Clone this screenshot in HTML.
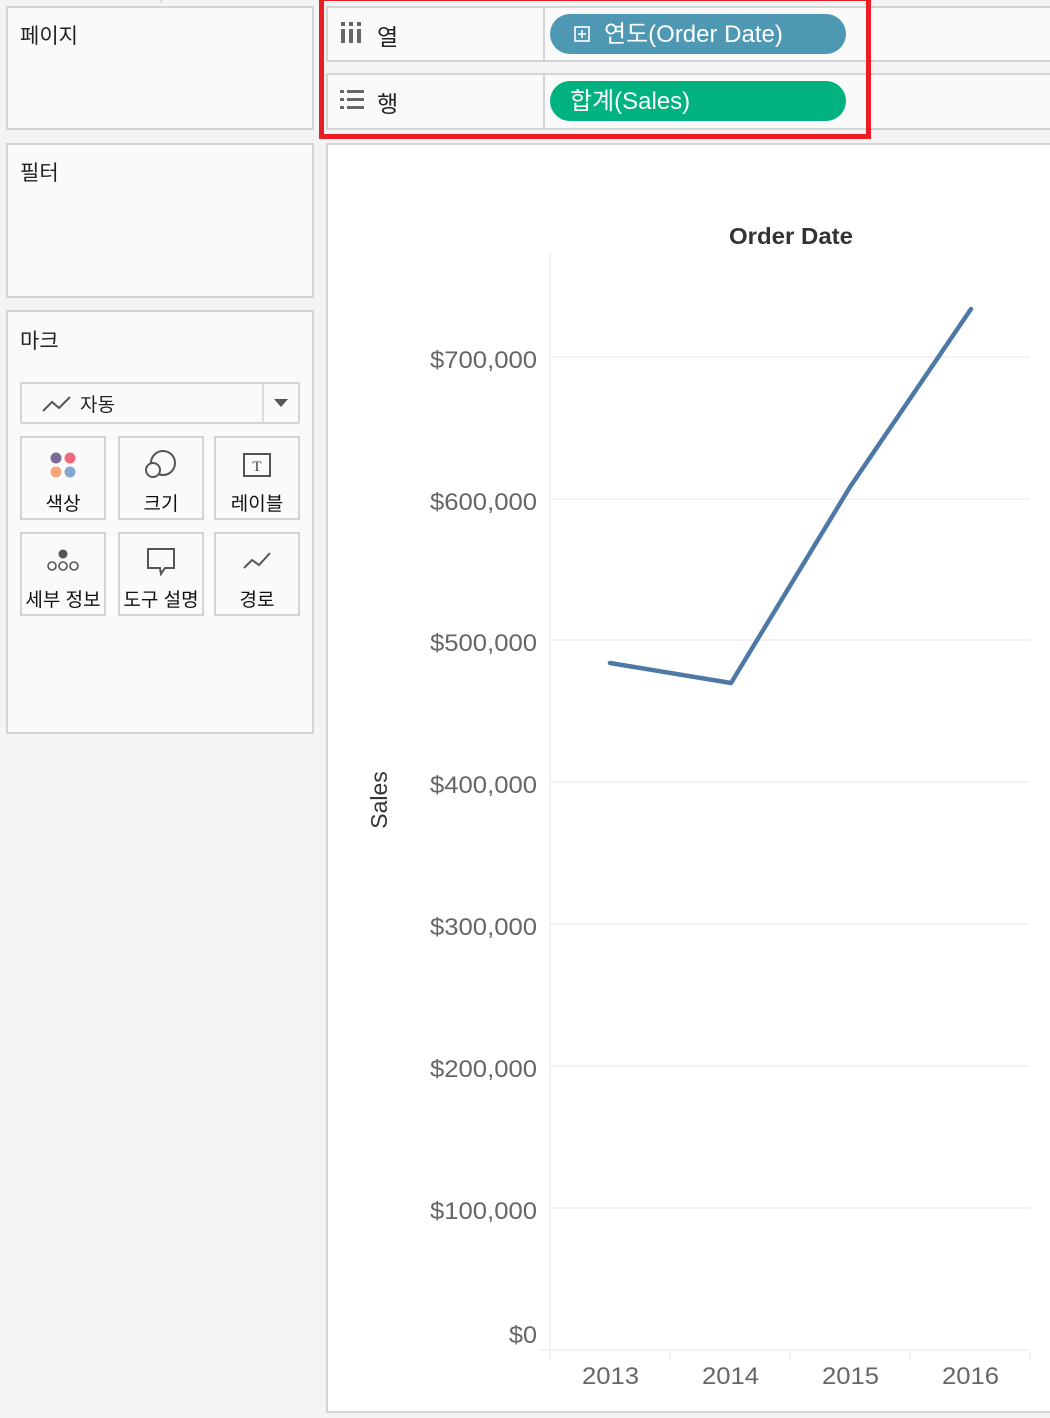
<!DOCTYPE html>
<html><head><meta charset="utf-8"><style>
*{margin:0;padding:0;box-sizing:border-box}
body{width:1050px;height:1418px;background:#f4f4f4;position:relative;overflow:hidden;font-family:"Liberation Sans","Noto Sans CJK KR",sans-serif;color:#333}
.p{position:absolute;background:#fafafa;border:2px solid #d4d4d4}
.t{position:absolute;font-size:21px;color:#222}
.card{position:absolute;width:86px;height:84px;border:2px solid #d4d4d4;background:#fafafa;text-align:center}
.card span{position:absolute;left:0;right:0;top:51px;font-size:19px;color:#111;white-space:nowrap}
.card svg{position:absolute;left:50%;top:12px;transform:translateX(-50%)}
.pill{position:absolute;left:550px;width:296px;height:40px;border-radius:20px;color:#fff;font-size:24px;line-height:41px}
</style></head><body>
<div style="position:absolute;left:160px;top:0;width:2px;height:3px;background:#ddd"></div>
<div class="p" style="left:6px;top:6px;width:308px;height:124px"></div>
<div class="t" style="left:20px;top:20px">페이지</div>
<div class="p" style="left:6px;top:143px;width:308px;height:155px"></div>
<div class="t" style="left:20px;top:157px">필터</div>
<div class="p" style="left:6px;top:310px;width:308px;height:424px"></div>
<div class="t" style="left:20px;top:325px">마크</div>
<div style="position:absolute;left:20px;top:382px;width:280px;height:42px;border:2px solid #d4d4d4;background:#fafafa;border-radius:2px">
<div style="position:absolute;left:240px;top:0;width:2px;height:38px;background:#ddd"></div>
<svg style="position:absolute;left:20px;top:10px" width="30" height="20"><polyline points="1,17 10,8 17,14 28,3" fill="none" stroke="#555" stroke-width="2"/></svg>
<span style="position:absolute;left:58px;top:6px;font-size:19px;color:#222">자동</span>
<svg style="position:absolute;left:252px;top:15px" width="14" height="9"><polygon points="0,0 14,0 7,8" fill="#555"/></svg>
</div>
<div class="card" style="left:20px;top:436px"><svg width="30" height="30"><circle cx="8" cy="8" r="5.5" fill="#7b6a9a"/><circle cx="22" cy="8" r="5.5" fill="#f0687a"/><circle cx="8" cy="22" r="5.5" fill="#f3a47a"/><circle cx="22" cy="22" r="5.5" fill="#82a8d1"/></svg><span>색상</span></div>
<div class="card" style="left:118px;top:436px"><svg width="34" height="30"><circle cx="19" cy="13" r="12" fill="none" stroke="#555" stroke-width="2"/><circle cx="9" cy="20" r="7" fill="#fafafa" stroke="#555" stroke-width="2"/></svg><span>크기</span></div>
<div class="card" style="left:214px;top:436px"><svg width="30" height="30"><rect x="2" y="4" width="26" height="22" fill="none" stroke="#555" stroke-width="2"/><text x="15" y="21" font-size="15" text-anchor="middle" fill="#444" font-family="Liberation Serif">T</text></svg><span>레이블</span></div>
<div class="card" style="left:20px;top:532px"><svg width="34" height="30"><circle cx="17" cy="8" r="4.5" fill="#555"/><circle cx="6" cy="20" r="4" fill="none" stroke="#555" stroke-width="1.6"/><circle cx="17" cy="20" r="4" fill="none" stroke="#555" stroke-width="1.6"/><circle cx="28" cy="20" r="4" fill="none" stroke="#555" stroke-width="1.6"/></svg><span>세부 정보</span></div>
<div class="card" style="left:118px;top:532px"><svg width="32" height="32"><path d="M3,3 H29 V22 H20 L16,28 L15,22 H3 Z" fill="none" stroke="#555" stroke-width="2"/></svg><span>도구 설명</span></div>
<div class="card" style="left:214px;top:532px"><svg width="32" height="30"><polyline points="3,22 11,14 18,19 29,7" fill="none" stroke="#555" stroke-width="2"/></svg><span>경로</span></div>

<div class="p" style="left:326px;top:6px;width:740px;height:56px"></div>
<div class="p" style="left:326px;top:73px;width:740px;height:57px"></div>
<div style="position:absolute;left:543px;top:8px;width:2px;height:52px;background:#d4d4d4"></div>
<div style="position:absolute;left:543px;top:75px;width:2px;height:53px;background:#d4d4d4"></div>
<svg style="position:absolute;left:341px;top:20px" width="22" height="26"><g fill="#666"><rect x="0" y="2" width="4" height="4"/><rect x="0" y="9" width="4" height="14"/><rect x="8" y="2" width="4" height="4"/><rect x="8" y="9" width="4" height="14"/><rect x="16" y="2" width="4" height="4"/><rect x="16" y="9" width="4" height="14"/></g></svg>
<div class="t" style="left:377px;top:18px;font-size:23px">열</div>
<svg style="position:absolute;left:340px;top:90px" width="26" height="22"><g fill="#666"><rect x="0" y="0" width="4" height="3"/><rect x="7" y="0" width="17" height="3"/><rect x="0" y="8" width="4" height="3"/><rect x="7" y="8" width="17" height="3"/><rect x="0" y="16" width="4" height="3"/><rect x="7" y="16" width="17" height="3"/></g></svg>
<div class="t" style="left:377px;top:85px;font-size:23px">행</div>
<div class="pill" style="top:14px;background:#4e98b4"><svg style="position:absolute;left:24px;top:12px" width="16" height="16"><rect x="1" y="1" width="14" height="14" fill="none" stroke="#fff" stroke-width="1.6"/><path d="M4,8 H12 M8,4 V12" stroke="#fff" stroke-width="1.6"/></svg><span style="position:absolute;left:54px">연도(Order Date)</span></div>
<div class="pill" style="top:81px;background:#00b27f"><span style="position:absolute;left:20px">합계(Sales)</span></div>
<div style="position:absolute;left:319px;top:-4px;width:552px;height:143px;border:5px solid #ec1c24"></div>

<div style="position:absolute;left:326px;top:143px;width:730px;height:1270px;background:#fff;border:2px solid #d4d4d4"></div>
<svg style="position:absolute;left:0;top:0" width="1050" height="1418">
<g stroke="#efefef" stroke-width="1.5">
<line x1="550" y1="253" x2="550" y2="1352"/>
<line x1="550" y1="357" x2="1030" y2="357"/>
<line x1="550" y1="499" x2="1030" y2="499"/>
<line x1="550" y1="640" x2="1030" y2="640"/>
<line x1="550" y1="782" x2="1030" y2="782"/>
<line x1="550" y1="924" x2="1030" y2="924"/>
<line x1="550" y1="1066" x2="1030" y2="1066"/>
<line x1="550" y1="1208" x2="1030" y2="1208"/>
<line x1="540" y1="1350" x2="1030" y2="1350"/>
<line x1="550" y1="1352" x2="550" y2="1360"/><line x1="670" y1="1352" x2="670" y2="1360"/><line x1="790" y1="1352" x2="790" y2="1360"/><line x1="910" y1="1352" x2="910" y2="1360"/><line x1="1030" y1="1352" x2="1030" y2="1360"/>
</g>
<polyline points="610,663 731,683 850,487 971,309" fill="none" stroke="#4e79a7" stroke-width="4.5" stroke-linecap="round" stroke-linejoin="round"/>
<g font-family="Liberation Sans, sans-serif" font-size="24" fill="#666">
<text x="430" y="368" textLength="107" lengthAdjust="spacingAndGlyphs">$700,000</text>
<text x="430" y="510" textLength="107" lengthAdjust="spacingAndGlyphs">$600,000</text>
<text x="430" y="651" textLength="107" lengthAdjust="spacingAndGlyphs">$500,000</text>
<text x="430" y="793" textLength="107" lengthAdjust="spacingAndGlyphs">$400,000</text>
<text x="430" y="935" textLength="107" lengthAdjust="spacingAndGlyphs">$300,000</text>
<text x="430" y="1077" textLength="107" lengthAdjust="spacingAndGlyphs">$200,000</text>
<text x="430" y="1219" textLength="107" lengthAdjust="spacingAndGlyphs">$100,000</text>
<text x="509" y="1343" textLength="28" lengthAdjust="spacingAndGlyphs">$0</text>
</g>
<g font-family="Liberation Sans, sans-serif" font-size="24" fill="#666">
<text x="582" y="1384" textLength="57" lengthAdjust="spacingAndGlyphs">2013</text>
<text x="702" y="1384" textLength="57" lengthAdjust="spacingAndGlyphs">2014</text>
<text x="822" y="1384" textLength="57" lengthAdjust="spacingAndGlyphs">2015</text>
<text x="942" y="1384" textLength="57" lengthAdjust="spacingAndGlyphs">2016</text>
</g>
<text x="729" y="244" font-family="Liberation Sans, sans-serif" font-size="23" font-weight="bold" fill="#333" textLength="124" lengthAdjust="spacingAndGlyphs">Order Date</text>
<text transform="translate(387,800) rotate(-90)" font-family="Liberation Sans, sans-serif" font-size="23" fill="#333" text-anchor="middle">Sales</text>
</svg>
</body></html>
